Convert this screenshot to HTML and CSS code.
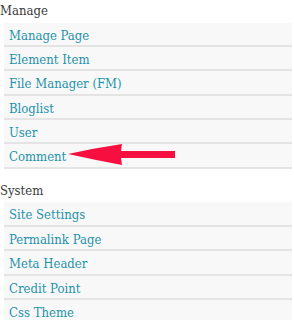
FILE: index.html
```html
<!DOCTYPE html>
<html lang="en">
<head>
  <meta charset="UTF-8">
  <title>Admin Menu</title>
  <link rel="stylesheet" href="styles.css">
</head>
<body>
  <h3 class="group-title">Manage</h3>
  <ul class="menu">
    <li><a href="#">Manage Page</a></li>
    <li><a href="#">Element Item</a></li>
    <li><a href="#">File Manager (FM)</a></li>
    <li><a href="#">Bloglist</a></li>
    <li><a href="#">User</a></li>
    <li class="marked">
      <a href="#">Comment</a>
      <svg class="arrow" width="110" height="24" viewBox="0 0 110 24">
        <path d="M2 11 Q29 5 56 1 L55 8 L109 8 L109 15 L55 15 L56 22 Q29 17 2 11 Z" fill="#f7103f"/>
      </svg>
    </li>
  </ul>

  <h3 class="group-title system">System</h3>
  <ul class="menu">
    <li><a href="#">Site Settings</a></li>
    <li><a href="#">Permalink Page</a></li>
    <li><a href="#">Meta Header</a></li>
    <li><a href="#">Credit Point</a></li>
    <li><a href="#">Css Theme</a></li>
  </ul>
</body>
</html>
```

FILE: styles.css
```css
body { margin: 0; background: #fff; font-family: "DejaVu Serif Condensed", "DejaVu Serif", serif; overflow: hidden; }
.group-title { margin: 0; padding-left: 0; font-size: 13px; font-weight: normal; line-height: 22.5px; color: #3a3a3a; }
.group-title.system { margin-top: 11px; }
.menu { list-style: none; margin: 0 2px 0 4px; padding: 0; }
.menu li { position: relative; background: #f8f8f8; border-bottom: 2px solid #e4e4e4; height: 22.4px; line-height: 23px; padding-left: 5px; }
.menu a { color: #2592aa; text-decoration: none; font-size: 13px; }
.arrow { position: absolute; left: 62px; top: -1px; }
```
